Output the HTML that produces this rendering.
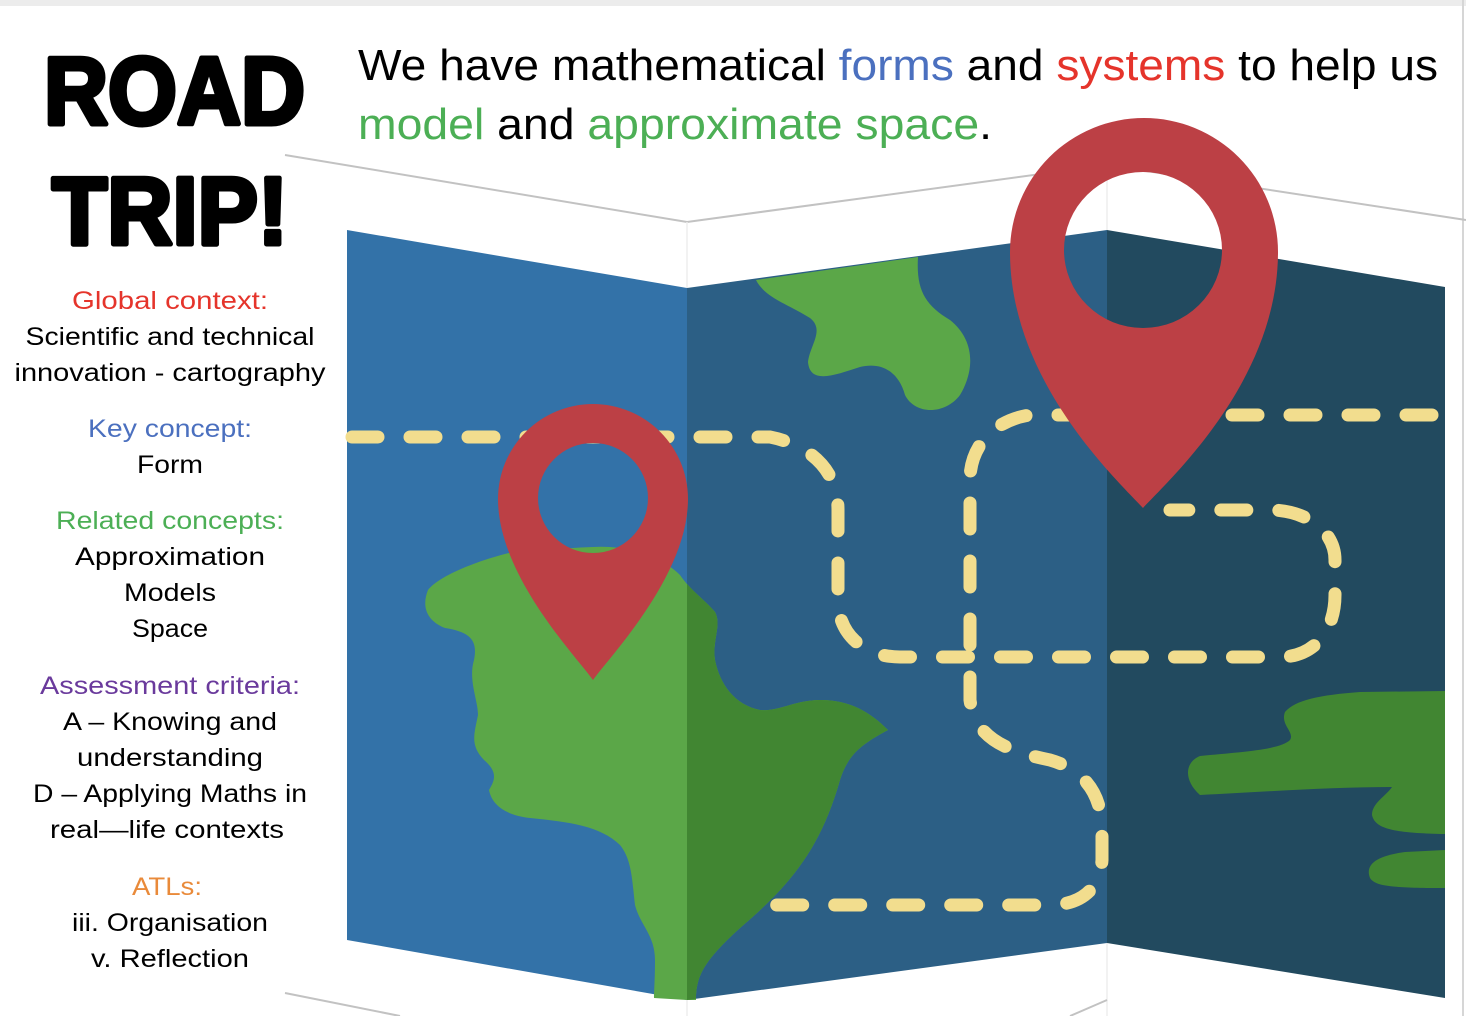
<!DOCTYPE html>
<html><head><meta charset="utf-8"><style>
html,body{margin:0;padding:0;background:#fff;}
svg{display:block;}
</style></head><body>
<svg width="1466" height="1016" viewBox="0 0 1466 1016" xmlns="http://www.w3.org/2000/svg">
<defs>
<clipPath id="p2"><polygon points="687,288 1107,230 1107,943 687,1000"/></clipPath>
</defs>
<rect x="0" y="0" width="1466" height="6" fill="#ececec"/>
<line x1="1463" y1="0" x2="1463" y2="1016" stroke="#d6d6d6" stroke-width="2"/>
<polyline points="285,155 687,222 1107,165 1466,220" fill="none" stroke="#c2c2c2" stroke-width="2"/>
<line x1="687" y1="222" x2="687" y2="1016" stroke="#eeeeee" stroke-width="1.5"/>
<line x1="1107" y1="165" x2="1107" y2="1016" stroke="#eeeeee" stroke-width="1.5"/>
<polyline points="285,993 400,1016" fill="none" stroke="#c2c2c2" stroke-width="2"/>
<polyline points="1107,1000 1070,1016" fill="none" stroke="#c2c2c2" stroke-width="2"/>
<polygon points="347,230 687,288 687,1000 347,940" fill="#3372a8"/>
<polygon points="687,288 1107,230 1107,943 687,1000" fill="#2c5f85"/>
<polygon points="1107,230 1445,287 1445,998 1107,943" fill="#224a5f"/>
<path d="M918,257 C916,290 925,305 950,320 C975,340 975,370 960,395 C945,415 915,415 905,395 C898,370 880,362 860,367 C835,375 810,385 808,362 C810,345 825,330 810,318 C790,305 765,298 756,280 Z" fill="#5ba748"/>
<path d="M593,547 C560,548 530,552 509,553 C480,560 440,575 428,590 C422,605 425,620 445,628 C470,632 478,640 474,660 C468,680 478,700 478,715 C474,735 470,745 484,760 C498,772 495,780 489,790 C492,805 505,815 530,818 C570,822 600,826 620,845 C632,860 632,880 635,905 C640,925 655,935 655,960 C655,980 654,990 654,998 L687,1000 L696,1000 C696,975 705,960 740,928 C790,885 820,850 840,780 C848,755 860,745 888,730 C870,712 850,700 820,700 C795,700 778,712 760,710 C735,705 720,685 715,660 C712,640 722,625 715,612 C705,600 690,590 680,575 C660,555 625,545 593,547 Z" fill="#5ba748"/>
<g clip-path="url(#p2)"><path d="M593,547 C560,548 530,552 509,553 C480,560 440,575 428,590 C422,605 425,620 445,628 C470,632 478,640 474,660 C468,680 478,700 478,715 C474,735 470,745 484,760 C498,772 495,780 489,790 C492,805 505,815 530,818 C570,822 600,826 620,845 C632,860 632,880 635,905 C640,925 655,935 655,960 C655,980 654,990 654,998 L687,1000 L696,1000 C696,975 705,960 740,928 C790,885 820,850 840,780 C848,755 860,745 888,730 C870,712 850,700 820,700 C795,700 778,712 760,710 C735,705 720,685 715,660 C712,640 722,625 715,612 C705,600 690,590 680,575 C660,555 625,545 593,547 Z" fill="#418632"/></g>
<path d="M1445,691 L1360,692 C1320,695 1295,700 1285,712 C1280,725 1295,732 1290,740 C1280,750 1240,752 1200,756 C1185,762 1183,780 1200,795 C1260,792 1330,787 1392,787 C1385,797 1372,803 1372,815 C1375,828 1390,833 1445,834 Z" fill="#418632"/>
<path d="M1445,850 L1405,852 C1375,856 1365,865 1370,878 C1375,886 1390,888 1445,888 Z" fill="#418632"/>
<g fill="none" stroke="#f2dd8e" stroke-width="13" stroke-linecap="round" stroke-dasharray="26,32">
<path d="M352,437 L770,437 C810,445 838,470 838,510 L838,600 C838,635 865,657 900,657 L1280,657 C1315,657 1335,630 1335,595 L1335,560 C1335,530 1305,510 1270,510 L1170,510"/>
<path d="M1432,415 L1030,415 C995,420 970,445 970,480 L970,700 C975,735 1000,750 1050,760 C1085,770 1102,795 1102,830 L1102,860 C1100,890 1080,905 1050,905 L768,905"/>
</g>
<path fill-rule="evenodd" fill="#bc4045" d="M593,680 C575,655 498,575 498,499 A95,95 0 0 1 688,499 C688,575 611,655 593,680 Z M538,498 A55,55 0 1 0 648,498 A55,55 0 1 0 538,498 Z"/>
<path fill-rule="evenodd" fill="#bc4045" d="M1143,508 C1115,478 1010,380 1010,252 A134,134 0 0 1 1278,252 C1278,380 1171,478 1143,508 Z M1064,250 A79,78 0 1 0 1222,250 A79,78 0 1 0 1064,250 Z"/>
<g font-family="'Liberation Sans',sans-serif" font-weight="900" fill="#000" stroke="#000" stroke-width="5" stroke-linejoin="round">
<text x="44" y="124" font-size="96" textLength="261" lengthAdjust="spacingAndGlyphs">ROAD</text>
<text x="52" y="244" font-size="96" textLength="236" lengthAdjust="spacingAndGlyphs">TRIP!</text>
</g>
<g font-family="'Liberation Sans',sans-serif" font-size="44" fill="#000">
<text x="358" y="80" textLength="1080" lengthAdjust="spacingAndGlyphs">We have mathematical <tspan fill="#4b70bf">forms</tspan> and <tspan fill="#e5342b">systems</tspan> to help us</text>
<text x="358" y="139" textLength="634" lengthAdjust="spacingAndGlyphs"><tspan fill="#4caf55">model</tspan> and <tspan fill="#4caf55">approximate space</tspan>.</text>
</g>
<g font-family="'Liberation Sans',sans-serif" font-size="25" text-anchor="middle" fill="#000">
<text x="170" y="309" fill="#e5342b" textLength="196" lengthAdjust="spacingAndGlyphs">Global context:</text>
<text x="170" y="345" textLength="289" lengthAdjust="spacingAndGlyphs">Scientific and technical</text>
<text x="170" y="381" textLength="311" lengthAdjust="spacingAndGlyphs">innovation - cartography</text>
<text x="170" y="437" fill="#4b70bf" textLength="164" lengthAdjust="spacingAndGlyphs">Key concept:</text>
<text x="170" y="473" textLength="66" lengthAdjust="spacingAndGlyphs">Form</text>
<text x="170" y="529" fill="#4caf55" textLength="228" lengthAdjust="spacingAndGlyphs">Related concepts:</text>
<text x="170" y="565" textLength="190" lengthAdjust="spacingAndGlyphs">Approximation</text>
<text x="170" y="601" textLength="92" lengthAdjust="spacingAndGlyphs">Models</text>
<text x="170" y="637" textLength="76" lengthAdjust="spacingAndGlyphs">Space</text>
<text x="170" y="694" fill="#6a3a9c" textLength="260" lengthAdjust="spacingAndGlyphs">Assessment criteria:</text>
<text x="170" y="730" textLength="214" lengthAdjust="spacingAndGlyphs">A – Knowing and</text>
<text x="170" y="766" textLength="186" lengthAdjust="spacingAndGlyphs">understanding</text>
<text x="170" y="802" textLength="274" lengthAdjust="spacingAndGlyphs">D – Applying Maths in</text>
<text x="167" y="838" textLength="234" lengthAdjust="spacingAndGlyphs">real—life contexts</text>
<text x="167" y="895" fill="#e98a3a" textLength="70" lengthAdjust="spacingAndGlyphs">ATLs:</text>
<text x="170" y="931" textLength="196" lengthAdjust="spacingAndGlyphs">iii. Organisation</text>
<text x="170" y="967" textLength="158" lengthAdjust="spacingAndGlyphs">v. Reflection</text>
</g>
</svg>
</body></html>
